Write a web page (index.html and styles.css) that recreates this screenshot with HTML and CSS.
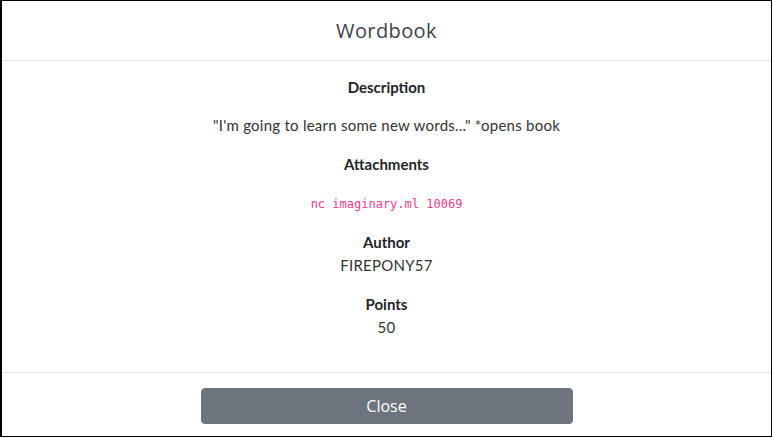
FILE: index.html
```html
<!DOCTYPE html>
<html>
<head>
<meta charset="utf-8">
<link rel="stylesheet" href="styles.css">
</head>
<body>
<div class="modal">
  <div class="modal-header">
    <h1 class="title">Wordbook</h1>
  </div>
  <div class="modal-body">
    <div class="label">Description</div>
    <div class="text">"I'm going to learn some new words..." *opens book</div>
    <div class="label">Attachments</div>
    <code class="code">nc imaginary.ml 10069</code>
    <div class="pair">
      <div class="label">Author</div>
      <div class="text">FIREPONY57</div>
    </div>
    <div class="pair">
      <div class="label">Points</div>
      <div class="text">50</div>
    </div>
  </div>
  <div class="modal-footer">
    <button class="btn">Close</button>
  </div>
</div>
</body>
</html>
```
FILE: styles.css
```css
html, body {
  margin: 0;
  padding: 0;
  background: #fff;
}
.modal {
  width: 769px;
  height: 435px;
  border-top: 1px solid #000;
  border-bottom: 1px solid #000;
  border-left: 2px solid #000;
  border-right: 1px solid #000;
  display: flex;
  flex-direction: column;
  font-family: "Lato", "Noto Sans", sans-serif;
  color: #212529;
}
.modal-header {
  height: 59px;
  border-bottom: 1px solid #e5e5e5;
  display: flex;
  align-items: center;
  justify-content: center;
}
.title {
  margin: 0;
  font-family: "Open Sans", sans-serif;
  font-weight: 400;
  font-size: 20px;
  color: #3d4348;
  letter-spacing: 0.4px;
}
.modal-body {
  flex: 1;
  display: flex;
  flex-direction: column;
  align-items: center;
  gap: 14.6px;
  padding-top: 14px;
}
.pair {
  display: flex;
  flex-direction: column;
  align-items: center;
}
.label {
  font-weight: 700;
  font-size: 15px;
  line-height: 24px;
}
.text {
  font-size: 15px;
  line-height: 23.5px;
  color: #333;
  letter-spacing: 0.25px;
}
.code {
  display: block;
  font-family: "DejaVu Sans Mono", monospace;
  font-size: 12px;
  line-height: 24px;
  margin-top: 2px;
  margin-bottom: -1px;
  color: #e83e8c;
}
.modal-footer {
  height: 64px;
  border-top: 1px solid #e5e5e5;
  display: flex;
  justify-content: center;
  padding-top: 15px;
  box-sizing: border-box;
}
.btn {
  width: 372px;
  height: 36px;
  background: #6c757d;
  border: 1px solid #6c757d;
  border-radius: 4px;
  color: #fff;
  font-family: "Open Sans", sans-serif;
  font-size: 16px;
  line-height: 22px;
  padding: 0;
}
```
